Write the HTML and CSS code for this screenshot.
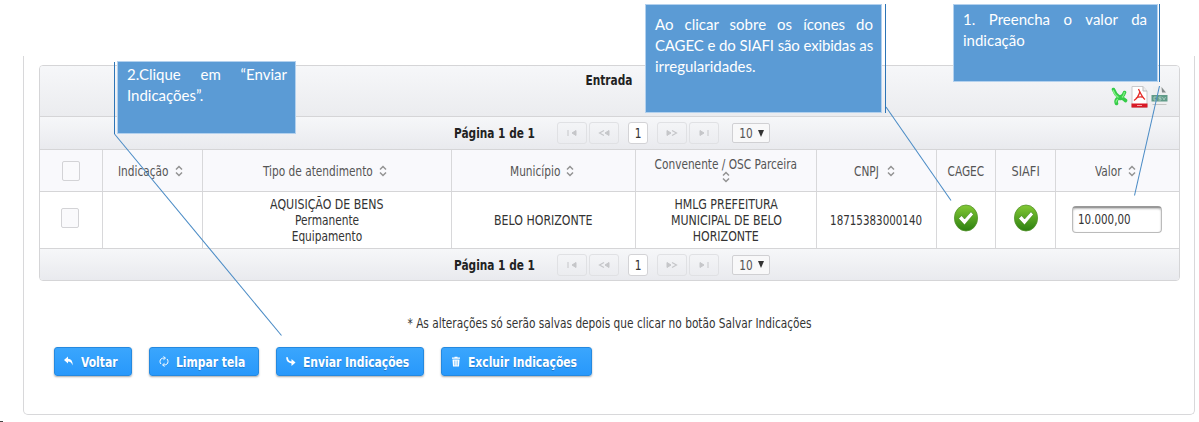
FILE: index.html
```
<!DOCTYPE html>
<html lang="pt-BR">
<head>
<meta charset="utf-8">
<title>Indicações</title>
<link rel="stylesheet" href="styles.css">
</head>
<body>
<svg class="defs" width="0" height="0">
  <defs>
    <linearGradient id="green" x1="0" y1="0" x2="0" y2="1"><stop offset="0" stop-color="#83c935"/><stop offset="1" stop-color="#2c8010"/></linearGradient>
    <symbol id="sort" viewBox="0 0 8 12"><path d="M1 4.600 4 1.400 7 4.600M1 7.400 4 10.600 7 7.400" fill="none" stroke="#929292" stroke-width="1.400"/></symbol>
    <symbol id="ok" viewBox="0 0 26 28"><ellipse cx="13" cy="14" rx="11.600" ry="13" fill="url(#green)" stroke="#55932f" stroke-width=".8"/><path d="M5.700 14.500 8.600 11.700 11.600 15 18 7.800 20.300 10.500 11.500 20.800Z" fill="#fff" stroke="#397e1b" stroke-width=".5"/></symbol>
    <symbol id="first" viewBox="0 0 10 8"><path d="M1 1v6M9 1.500 5 4l4 2.500Z" fill="#c5c6c9" stroke="#c5c6c9"/></symbol>
    <symbol id="prev" viewBox="0 0 12 8"><path d="M6 1.500 1.500 4 6 6.500" fill="none" stroke="#c5c6c9" stroke-width="1.200"/><path d="M11 1.500 7 4l4 2.500Z" fill="#c5c6c9" stroke="#c5c6c9"/></symbol>
  </defs>
</svg>
<main class="panel">
  <section class="table">
    <header class="caption">
      <b class="title"><span class="t">Entrada</span></b>
      <div class="exports">
        <svg width="17" height="20" viewBox="0 0 17 20"><path d="M2.500 2.500Q4 7 8 10Q12 10 13.500 5.500M8 10.500Q4 13 5.500 16.500M9 11.500Q12 10.500 14.500 13.500" fill="none" stroke="#35cb48" stroke-width="3.600" stroke-linecap="round"/><path d="M2 3Q3.500 8 7.500 10.500M13.500 5Q13 8.500 11 10.500M5 15.500Q5 13 7 12" fill="none" stroke="#83f283" stroke-width="1.200"/></svg>
        <svg width="17" height="22" viewBox="0 0 17 22"><path d="M1 .5h11l4 4.500v16.500H1Z" fill="#fff" stroke="#c9c9cb"/><path d="M12 .5V5h4" fill="#eee" stroke="#bbb"/><path d="M7.500 3C10 8 11 11 14 13.500M8.800 6Q7 12 3 14.500M5 12Q9 10 13 11.500" fill="none" stroke="#e52c28" stroke-width="1.300"/><path d="M.5 17.500h16v4H.5Z" fill="#d91926"/><path d="M6 19.500h5" stroke="#f5a4a4"/></svg>
        <svg width="17" height="22" viewBox="0 0 17 22"><path d="M2 .5h9l5 6V20H2Z" fill="#eeeff0"/><path d="M10.500 1 15 6.500h-4Z" fill="#858b8b"/><path d="M.5 9h16v6.500H.5Z" fill="#609b88"/><path d="M1.500 18.500h14" stroke="#c4c4c4"/><path d="M6 11H3v3h3M10.500 11H8v1.500h2V14H7.500M11.500 11l1.500 3 1.500-3" fill="none" stroke="#a5c9bd"/></svg>
      </div>
    </header>
    <nav class="pager">
      <b class="status"><span class="t">Página 1 de 1</span></b>
      <span class="pg a"><svg width="10" height="8"><use href="#first"/></svg></span><span class="pg"><svg width="12" height="8"><use href="#prev"/></svg></span><span class="num"><span class="t">1</span></span><span class="pg flip"><svg width="12" height="8"><use href="#prev"/></svg></span><span class="pg flip"><svg width="10" height="8"><use href="#first"/></svg></span>
      <span class="sel"><span class="t">10</span><svg width="6" height="7"><path d="M0 0h6L3 7Z" fill="#333"/></svg></span>
    </nav>
    <div class="row head">
      <div><i class="check"></i></div>
      <div class="sortable"><span class="t indicacao">Indicação</span><svg class="s"><use href="#sort"/></svg></div>
      <div class="sortable"><span class="t tipo">Tipo de atendimento</span><svg class="s"><use href="#sort"/></svg></div>
      <div class="sortable"><span class="t municipio">Município</span><svg class="s"><use href="#sort"/></svg></div>
      <div class="stack"><span class="t">Convenente / OSC Parceira</span><svg class="s"><use href="#sort"/></svg></div>
      <div class="sortable"><span class="t cnpj">CNPJ</span><svg class="s"><use href="#sort"/></svg></div>
      <div><span class="t">CAGEC</span></div>
      <div><span class="t siafi">SIAFI</span></div>
      <div class="sortable"><span class="t valor">Valor</span><svg class="s"><use href="#sort"/></svg></div>
    </div>
    <div class="row body">
      <div><i class="check"></i></div>
      <div></div>
      <div class="lines"><span class="t caps">AQUISIÇÃO DE BENS</span><span class="t">Permanente</span><span class="t">Equipamento</span></div>
      <div><span class="t caps">BELO HORIZONTE</span></div>
      <div class="lines"><span class="t caps">HMLG PREFEITURA</span><span class="t caps">MUNICIPAL DE BELO</span><span class="t caps">HORIZONTE</span></div>
      <div><span class="t digits">18715383000140</span></div>
      <div><svg class="ok"><use href="#ok"/></svg></div>
      <div><svg class="ok"><use href="#ok"/></svg></div>
      <div><span class="input"><span class="t">10.000,00</span></span></div>
    </div>
    <nav class="pager last">
      <b class="status"><span class="t">Página 1 de 1</span></b>
      <span class="pg a"><svg width="10" height="8"><use href="#first"/></svg></span><span class="pg"><svg width="12" height="8"><use href="#prev"/></svg></span><span class="num"><span class="t">1</span></span><span class="pg flip"><svg width="12" height="8"><use href="#prev"/></svg></span><span class="pg flip"><svg width="10" height="8"><use href="#first"/></svg></span>
      <span class="sel"><span class="t">10</span><svg width="6" height="7"><path d="M0 0h6L3 7Z" fill="#333"/></svg></span>
    </nav>
  </section>
  <p class="note"><span class="t">* As alterações só serão salvas depois que clicar no botão Salvar Indicações</span></p>
  <div class="actions">
    <a class="btn b1"><svg viewBox="0 0 10 10"><path d="M0 3.500 4 0v2.300Q9 2.500 8.500 9 7.500 5 4 5v2Z" fill="#fff"/></svg><span class="t">Voltar</span></a>
    <a class="btn b2"><svg viewBox="0 0 10 10"><path d="M5.500 1.500Q1 1.500 1 5q0 1.500 1 2.500M4.500 8.500Q9 8.500 9 5q0-1.500-1-2.500M4.500 0l2 1.600-2 1.600M5.500 6.800l-2 1.600 2 1.600" fill="none" stroke="#fff" stroke-width="1"/></svg><span class="t">Limpar tela</span></a>
    <a class="btn b3"><svg viewBox="0 0 10 10"><path d="M1 .8Q1.200 5.800 6 6" fill="none" stroke="#fff" stroke-width="1.800"/><path d="M5.500 2.600 9.500 6 5.500 9.400Z" fill="#fff"/></svg><span class="t">Enviar Indicações</span></a>
    <a class="btn b4"><svg viewBox="0 0 10 10"><path d="M3.500 1V.3h3V1H9v1.200H1V1ZM1.500 3h7L8 10H2Z" fill="#fff"/><path d="M3.500 4v5M5 4v5M6.500 4v5" stroke="#69b9fa" stroke-width=".6"/></svg><span class="t">Excluir Indicações</span></a>
  </div>
</main>
<svg class="leaders" width="1199" height="422" viewBox="0 0 1199 422">
  <g fill="none" stroke="#4a8bc5" stroke-width="1.050"><path d="M114.500 134 281.500 335.500"/><path d="M886 107 951 200.500"/><path d="M1159.500 86 1134.500 195.500"/></g>
  <g fill="none" stroke="#2e75b6"><path d="M114.500 62v72M885.500 4v109M1159.500 4v78"/></g>
  <path d="M0 421.500h3" stroke="#444"/>
</svg>
<aside class="note-box c1"><div class="j">2.Clique em “Enviar</div><div>Indicações”.</div></aside>
<aside class="note-box c2"><div class="j">Ao clicar sobre os ícones do</div><div class="j tight">CAGEC e do SIAFI são exibidas as</div><div>irregularidades.</div></aside>
<aside class="note-box c3"><div class="j">1. Preencha o valor da</div><div>indicação</div></aside>
</body>
</html>
```
FILE: styles.css
```
* { box-sizing: border-box; }
body { margin: 0; width: 1199px; height: 422px; overflow: hidden; background: #fff; color: #333; font: 14px/16px "DejaVu Sans Condensed", "DejaVu Sans", sans-serif; font-stretch: condensed; }
.defs { position: absolute; }
.t { display: inline-block; white-space: nowrap; transform: scaleX(.84); }
.t.caps { transform: scaleX(.875); }
.t.digits { transform: scaleX(.82); }
.t.siafi { transform: scaleX(.9); }
.panel { width: 1172px; height: 359px; margin: 56px 0 0 23px; border: 1px solid #d8d8da; border-top: 0; border-radius: 0 0 5px 5px; padding: 9px 14px 0 15px; }
.table { width: 1141px; height: 216px; border: 1px solid #d5d5d7; border-radius: 4px; overflow: hidden; }
.caption { height: 51px; padding-top: 6px; position: relative; text-align: center; background: linear-gradient(#f6f7f9, #ebecef); border-bottom: 1px solid #d5d5d7; color: #222; }
.exports { position: absolute; right: 11px; top: 20px; display: flex; gap: 3px; align-items: center; }
.title .t { margin-right: 2px; }
.pager { height: 32px; display: flex; align-items: center; background: linear-gradient(#f6f7f9, #e9eaee); padding-left: 414px; }
.status { width: 82px; color: #222; display: flex; }
.status .t { transform-origin: left; }
.pg, .num { border: 1px solid #e0e1e4; border-radius: 3px; height: 22px; display: flex; align-items: center; justify-content: center; width: 30px; margin-left: 2px; }
.pg.a { margin-left: 21px; }
.num { width: 20px; margin: 0 9px 0 9px; background: #fff; border-color: #d3d3d6; }
.num + .pg { margin-left: 0; }
.flip svg { transform: scaleX(-1); }
.sel { width: 38px; height: 20px; margin-left: 13px; border: 1px solid #d0d0d3; border-radius: 2px; background: #f8f8f9; display: flex; align-items: center; justify-content: center; gap: 4px; color: #555; }
.row { display: grid; grid-template-columns: 63px 100px 249px 184px 181px 120px 59px 60px 123px; border-top: 1px solid #d5d5d7; }
.row > div { display: flex; align-items: center; justify-content: center; border-right: 1px solid #d8d8da; min-width: 0; }
.row > div:last-child { border-right: 0; }
.head { height: 42px; background: #f9f9fc; color: #555; }
.body { height: 57px; }
.body + .pager { border-top: 1px solid #d5d5d7; }
.s { width: 8px; height: 12px; flex: none; }
.row .sortable { gap: 6px; padding-right: 4px; }
.sortable .t { transform-origin: left; }
.indicacao { width: 51px; }
.tipo { width: 110px; }
.municipio { width: 50px; }
.cnpj { width: 27px; }
.valor { width: 27px; }
.row .stack, .row .lines { flex-direction: column; }
.row .stack { padding-bottom: 2px; }
.stack .s { margin-top: -1px; }
.check { width: 18px; height: 20px; border: 1px solid #d3d3d6; border-radius: 2px; background: #fafafc; }
.body .check { margin: -4px 2px 0 0; }
.ok { width: 26px; height: 28px; margin-top: -4px; }
.input { width: 90px; height: 27px; margin: -1px 1px 0 0; border: 1px solid #bbb; border-top: 2px solid #999; border-radius: 4px; box-shadow: inset 0 1px 2px #bbb; padding: 3px 5px; }
.input .t { transform-origin: left; transform: scaleX(.82); }
.note { margin: 34px 0 0; display: flex; justify-content: center; height: 16px; }
.actions { display: flex; gap: 17px; margin: 16px 0 0 15px; }
.btn { height: 29px; border: 1px solid #2589df; border-radius: 3px; color: #fff; background: linear-gradient(#3aa6fd, #2898fb); box-shadow: 0 1px 2px #aaa; font-weight: bold; display: flex; align-items: center; padding-left: 9px; text-shadow: 0 1px #217ccd; }
.btn svg { width: 10px; height: 11px; margin-right: 7px; flex: none; }
.btn .t { transform-origin: left; transform: scaleX(.855); }
.b1 { width: 78px; } .b2 { width: 110px; } .b3 { width: 148px; } .b4 { width: 151px; }
.leaders { position: absolute; left: 0; top: 0; }
.note-box { position: absolute; background: #5b9bd5; border: 1px solid #b3d1ee; color: #fff; font: 15px/21px Lato, sans-serif; white-space: nowrap; }
.j { text-align-last: justify; }
.tight { letter-spacing: -.15px; }
.c1 { left: 117px; top: 61px; width: 179px; height: 73px; padding: 2px 8px 0 9px; }
.c2 { left: 645px; top: 4px; width: 237px; height: 109px; padding: 9px 8px 0 9px; }
.c3 { left: 953px; top: 4px; width: 205px; height: 78px; padding: 4px 10px 0 9px; }
```
